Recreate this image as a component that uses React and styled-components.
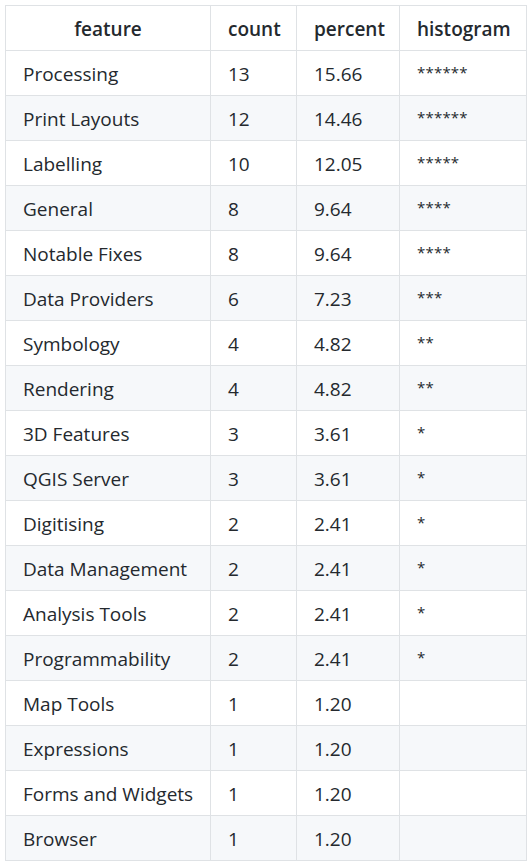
import styled, { createGlobalStyle } from 'styled-components';

const GlobalStyle = createGlobalStyle`
  body {
    margin: 0;
    background: #ffffff;
    font-family: "Open Sans", "Noto Sans", "Liberation Sans", sans-serif;
    color: #24292e;
  }
`;

const Page = styled.div`
  padding: 5px;
`;

const Table = styled.table`
  border-collapse: collapse;
  border-spacing: 0;
  table-layout: fixed;
  width: 521px;
  font-size: 19px;
`;

const Row = styled.tr`
  background-color: ${(p) => (p.$shaded ? '#f6f8fa' : '#ffffff')};
  border-top: 1px solid #dfe2e5;
`;

const HeadCell = styled.th`
  box-sizing: border-box;
  width: ${(p) => p.$width}px;
  border: 1px solid #dfe2e5;
  padding: 9px 17px 7px;
  height: 45px;
  line-height: 28px;
  font-weight: 600;
  text-align: center;
  white-space: nowrap;
`;

const Cell = styled.td`
  box-sizing: border-box;
  border: 1px solid #dfe2e5;
  padding: 9px 17px 7px;
  height: 45px;
  line-height: 28px;
  text-align: left;
  white-space: nowrap;
`;

const Stars = styled.span`
  display: inline-block;
  font-size: 15px;
  line-height: 16px;
  letter-spacing: 0.2px;
  vertical-align: top;
  padding-top: 4px;
`;

const columns = [
  { key: 'feature', width: 205 },
  { key: 'count', width: 86 },
  { key: 'percent', width: 103 },
  { key: 'histogram', width: 127 },
];

const rows = [
  ['Processing', 13, '15.66', '******'],
  ['Print Layouts', 12, '14.46', '******'],
  ['Labelling', 10, '12.05', '*****'],
  ['General', 8, '9.64', '****'],
  ['Notable Fixes', 8, '9.64', '****'],
  ['Data Providers', 6, '7.23', '***'],
  ['Symbology', 4, '4.82', '**'],
  ['Rendering', 4, '4.82', '**'],
  ['3D Features', 3, '3.61', '*'],
  ['QGIS Server', 3, '3.61', '*'],
  ['Digitising', 2, '2.41', '*'],
  ['Data Management', 2, '2.41', '*'],
  ['Analysis Tools', 2, '2.41', '*'],
  ['Programmability', 2, '2.41', '*'],
  ['Map Tools', 1, '1.20', ''],
  ['Expressions', 1, '1.20', ''],
  ['Forms and Widgets', 1, '1.20', ''],
  ['Browser', 1, '1.20', ''],
];

export default function App() {
  return (
    <Page>
      <GlobalStyle />
      <Table>
        <thead>
          <Row>
            {columns.map((c) => (
              <HeadCell key={c.key} $width={c.width}>
                {c.key}
              </HeadCell>
            ))}
          </Row>
        </thead>
        <tbody>
          {rows.map(([name, count, pct, hist], i) => (
            <Row key={name} $shaded={i % 2 === 1}>
              <Cell>{name}</Cell>
              <Cell>{count}</Cell>
              <Cell>{pct}</Cell>
              <Cell>
                <Stars>{hist}</Stars>
              </Cell>
            </Row>
          ))}
        </tbody>
      </Table>
    </Page>
  );
}
